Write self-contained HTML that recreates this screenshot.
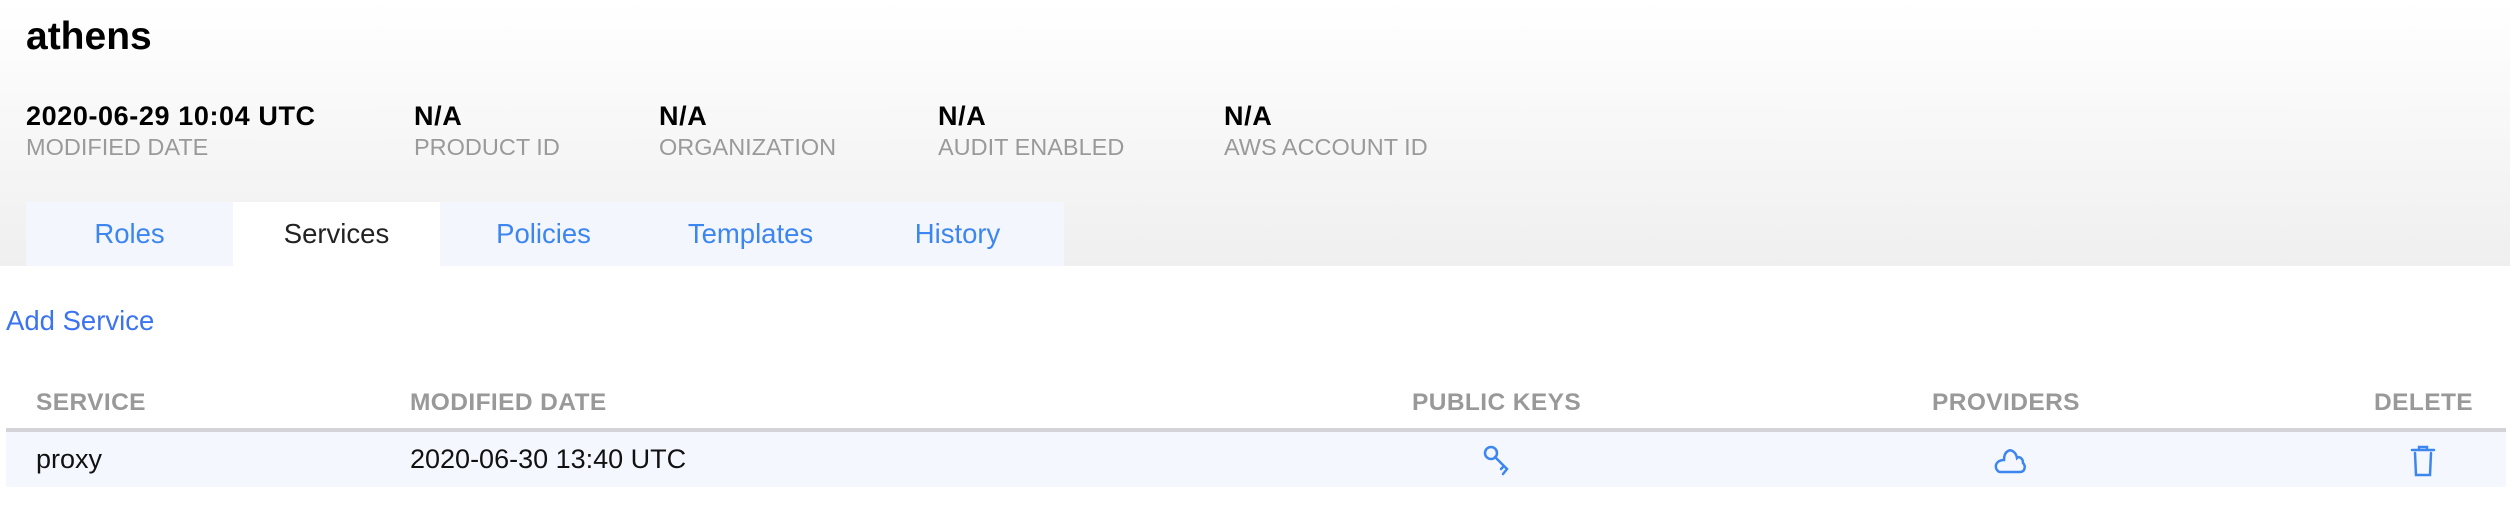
<!DOCTYPE html>
<html><head><style>
*{margin:0;padding:0;box-sizing:border-box}
body{width:2510px;height:512px;background:#fff;font-family:"Liberation Sans",sans-serif;position:relative;overflow:hidden}
.hdr{position:absolute;left:0;top:0;width:2510px;height:266px;background:linear-gradient(#fff,#efefef)}
.a{position:absolute;white-space:nowrap}
h1{position:absolute;left:26px;top:15px;font-size:39px;font-weight:bold;color:#000}
.v{font-size:27px;font-weight:bold;color:#000;top:101px;letter-spacing:0.6px}
.l{font-size:23.5px;color:#9a9a9a;top:134px}
.tabs{position:absolute;left:26px;top:202px;width:1038px;height:64px;background:#f3f6fc;display:flex}
.tab{width:207px;text-align:center;line-height:64px;font-size:27.5px;color:#3d86f0}
.tab.on{background:#fff;color:#222}
.th{font-size:24.5px;font-weight:bold;color:#999;top:389px;letter-spacing:0.4px}
.row{position:absolute;left:6px;top:428px;width:2500px;height:59px;background:#f4f7fd;border-top:4px solid #d4d4d8}
.td{font-size:27px;color:#111;top:444px}
</style></head><body>
<div class="hdr"></div>
<h1>athens</h1>
<div class="a v" style="left:26px">2020-06-29 10:04 UTC</div><div class="a l" style="left:26px">MODIFIED DATE</div>
<div class="a v" style="left:414px">N/A</div><div class="a l" style="left:414px">PRODUCT ID</div>
<div class="a v" style="left:659px">N/A</div><div class="a l" style="left:659px">ORGANIZATION</div>
<div class="a v" style="left:938px">N/A</div><div class="a l" style="left:938px">AUDIT ENABLED</div>
<div class="a v" style="left:1224px">N/A</div><div class="a l" style="left:1224px">AWS ACCOUNT ID</div>
<div class="tabs"><div class="tab">Roles</div><div class="tab on">Services</div><div class="tab">Policies</div><div class="tab">Templates</div><div class="tab">History</div></div>
<div class="a" style="left:6px;top:305px;font-size:27.5px;color:#3b73f0">Add Service</div>
<div class="a th" style="left:36px">SERVICE</div>
<div class="a th" style="left:410px">MODIFIED DATE</div>
<div class="a th" style="left:1412px">PUBLIC KEYS</div>
<div class="a th" style="left:1932px">PROVIDERS</div>
<div class="a th" style="left:2374px">DELETE</div>
<div class="row"></div>
<div class="a td" style="left:36px">proxy</div>
<div class="a td" style="left:410px">2020-06-30 13:40 UTC</div>
<svg class="a" style="left:1482px;top:444px" width="34" height="34" viewBox="0 0 34 34" fill="none" stroke="#3d86f0" stroke-width="2.5" stroke-linecap="round"><circle cx="9" cy="9" r="6"/><path d="M13 13 L22 22 L19 25 M22 22 L25 25 L21 30"/></svg>
<svg class="a" style="left:1992px;top:444px" width="36" height="32" viewBox="0 0 36 32" fill="none" stroke="#3d86f0" stroke-width="2.5"><path d="M8 28 H28 C33 28 34 22 31 19 C31 14 27 12 25 14 C24 8 19 5 16 7 C12 9 12 14 12 16 C7 16 3 19 4 24 C5 27 7 28 8 28 Z"/></svg>
<svg class="a" style="left:2408px;top:444px" width="30" height="34" viewBox="0 0 30 34" fill="none" stroke="#3d86f0" stroke-width="2.5" stroke-linecap="round"><path d="M4 6 H26 M11 6 V3 H19 V6 M7 9 L8 31 H22 L23 9"/></svg>
</body></html>
